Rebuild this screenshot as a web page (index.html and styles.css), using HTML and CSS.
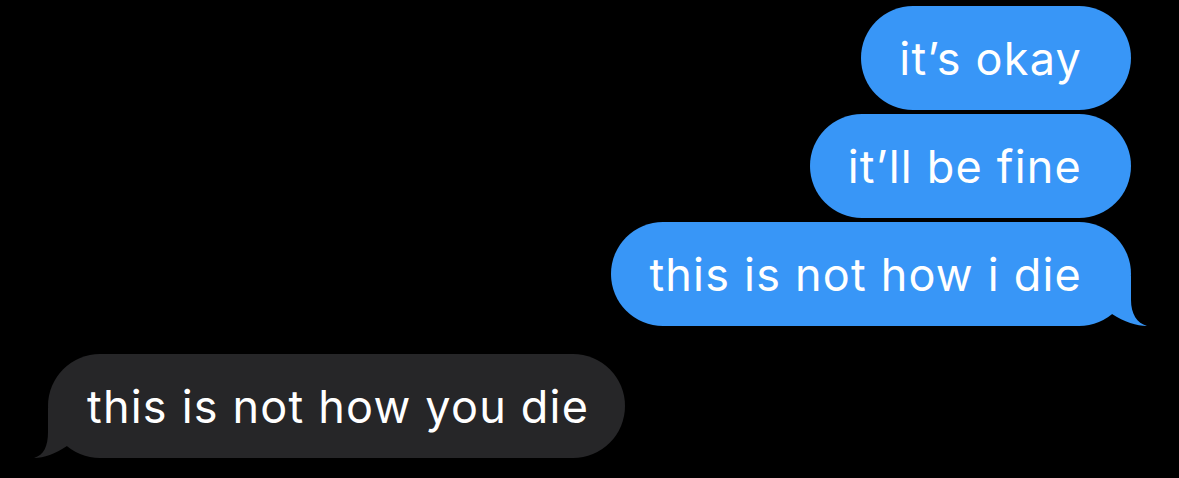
FILE: index.html
```html
<!DOCTYPE html>
<html>
<head>
<meta charset="utf-8">
<link rel="stylesheet" href="styles.css">
</head>
<body>
<div class="thread">
  <div class="msg sent"><span class="txt">it’s okay</span></div>
  <div class="msg sent"><span class="txt">it’ll be fine</span></div>
  <div class="msg sent tailed"><span class="txt">this is not how i die</span>
    <svg class="tail tail-r" width="50" height="50" viewBox="0 0 50 50"><path d="M0 0 L34 0 L34 24 C34 38 40 47 50 50 C40 50 27 46 15 38 L0 38 Z"/></svg>
  </div>
  <div class="msg recv tailed"><span class="txt">this is not how you die</span>
    <svg class="tail tail-l" width="50" height="50" viewBox="0 0 50 50"><path d="M50 0 L16 0 L16 24 C16 38 12 47 2 50 C12 50 23 46 35 38 L50 38 Z"/></svg>
  </div>
</div>
</body>
</html>
```

FILE: styles.css
```css
html, body {
  margin: 0;
  padding: 0;
  background: #000;
}
.thread {
  display: flex;
  flex-direction: column;
  gap: 4px;
  padding: 6px 48px 0 48px;
  height: 478px;
  box-sizing: border-box;
  font-family: "Inter", "Roboto", sans-serif;
}
.msg {
  position: relative;
  height: 104px;
  line-height: 106px;
  border-radius: 52px;
  font-size: 45px;
  letter-spacing: 1.2px;
  color: #fff;
  white-space: nowrap;
}
.txt {
  position: relative;
  z-index: 1;
}
.sent {
  align-self: flex-end;
  background: #3896f7;
  padding: 0 49px 0 38px;
}
.recv {
  align-self: flex-start;
  background: #262628;
  padding: 0 36px 0 39px;
  margin-top: 24px;
}
.tail {
  position: absolute;
  bottom: 0;
}
.tail-r {
  right: -16px;
  fill: #3896f7;
}
.tail-l {
  left: -16px;
  fill: #262628;
}
```
